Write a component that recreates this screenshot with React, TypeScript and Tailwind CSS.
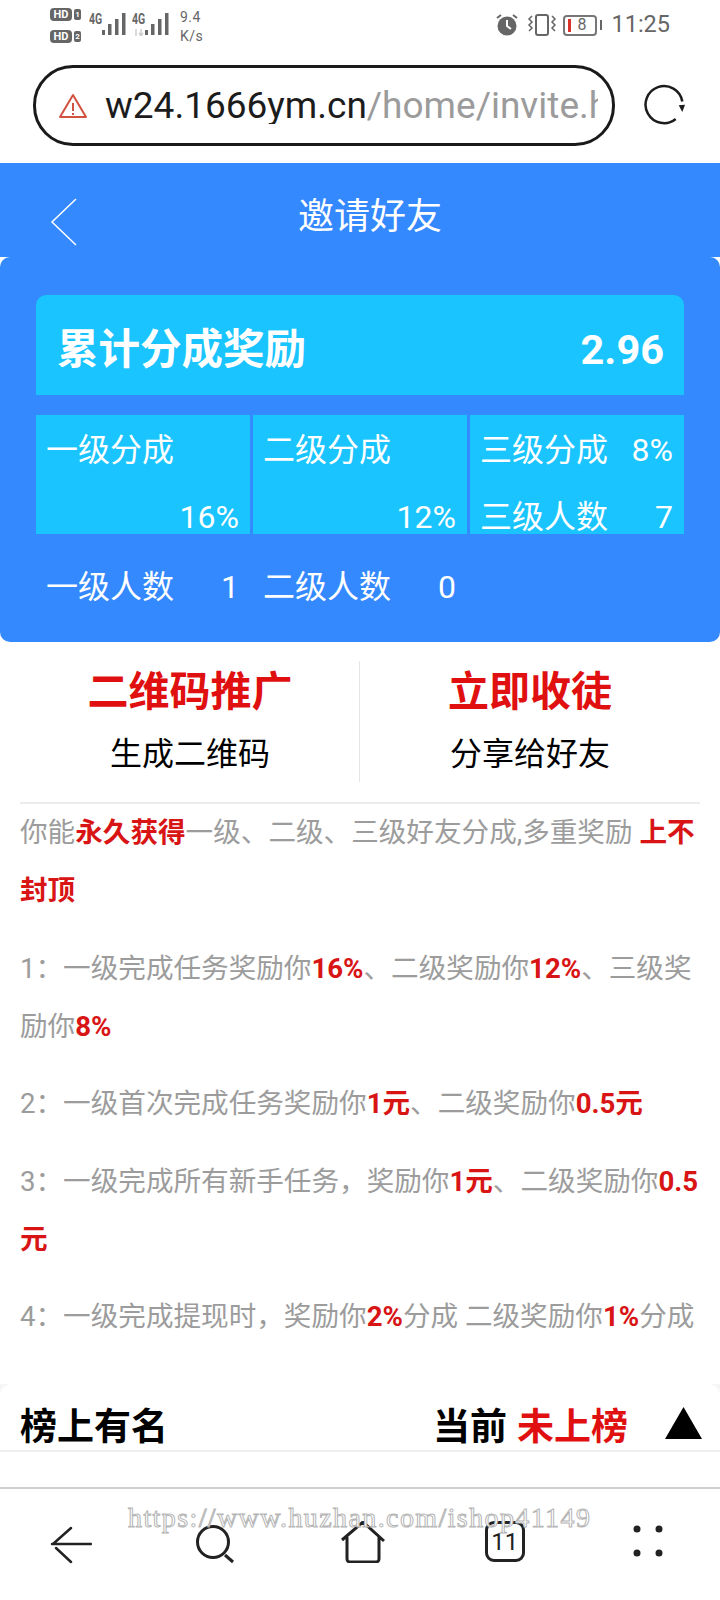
import React from "react";

const zh = "font-['Roboto','Noto_Sans_CJK_SC',sans-serif]";

const HdBadge = ({ n }: { n: string }) => (
  <div className="flex items-center gap-[2px]">
    <div className="flex h-[13px] w-[22px] items-center justify-center rounded-[4px] bg-[#666] text-[11px] leading-none font-bold text-white">
      HD
    </div>
    <div className="flex h-[11px] w-[7px] items-center justify-center rounded-[2px] bg-[#666] text-[8px] leading-none font-bold text-white">
      {n}
    </div>
  </div>
);

const Signal = () => (
  <svg width="24" height="22" viewBox="0 0 24 22" fill="#666">
    <rect x="0" y="17" width="3" height="5" />
    <rect x="6" y="11" width="3.5" height="11" />
    <rect x="13" y="6" width="3.5" height="16" />
    <rect x="20" y="0" width="3.5" height="22" />
  </svg>
);

const FourG = () => (
  <span className="w-[13px] origin-left scale-x-75 text-[14px] leading-[12px] font-bold">
    4G
  </span>
);

const StatusBar = () => (
  <div className="flex h-[65px] items-start justify-between pt-[8px] pr-[50px] pl-[50px] text-[#666]">
    <div className="flex items-start">
      <div className="flex flex-col gap-[9px]">
        <HdBadge n="1" />
        <HdBadge n="2" />
      </div>
      <div className="mt-[5px] ml-[8px] flex items-start">
        <FourG />
        <Signal />
        <div className="relative ml-[6px] flex items-start">
          <FourG />
          <Signal />
          <svg className="absolute top-[16px] left-[2px]" width="10" height="7" viewBox="0 0 10 7" fill="none" stroke="#cfcfcf" strokeWidth="1.5">
            <path d="M2 0v7M7 0v7M5 4l2 3 2-3" />
          </svg>
        </div>
      </div>
      <div className="ml-[11px] text-[14px] leading-[19px] tracking-[0.5px]">
        <div>9.4</div>
        <div>K/s</div>
      </div>
    </div>
    <div className="mt-[5px] flex items-center">
      <svg width="24" height="24" viewBox="0 0 24 24" fill="#666">
        <circle cx="12" cy="13" r="9.5" />
        <path d="M12 7v6l4 3" stroke="#fff" strokeWidth="2" fill="none" />
        <path d="M2 5l4-3M22 5l-4-3" stroke="#666" strokeWidth="2" fill="none" />
      </svg>
      <svg className="ml-[7px]" width="32" height="22" viewBox="0 0 32 22" fill="none" stroke="#666" strokeWidth="1.5">
        <rect x="10" y="1" width="12" height="20" rx="2" strokeWidth="2" />
        <path d="M6 2l-3 3 3 3-3 3 3 3-3 3" />
        <path d="M26 2l3 3-3 3 3 3-3 3 3 3" />
      </svg>
      <div className="ml-[5px] flex items-center">
        <div className="flex h-[21px] w-[34px] items-center rounded-[4px] border-2 border-[#777] pl-[3px]">
          <div className="h-[13px] w-[3px] bg-[#d9332b]" />
          <span className="ml-[6px] text-[16px] leading-none">8</span>
        </div>
        <div className="ml-[3px] h-[10px] w-[2px] bg-[#666]" />
      </div>
      <span className="ml-[9px] text-[23.5px] leading-none">11:25</span>
    </div>
  </div>
);

const UrlBar = () => (
  <div className="flex h-[98px] items-start pl-[33px]">
    <div className="flex h-[81px] w-[582px] items-center rounded-[40px] border-[3px] border-[#1a1a1a] pr-[14px] pl-[22px]">
      <svg className="shrink-0" width="30" height="28" viewBox="0 0 30 28" fill="none" stroke="#d0523f" strokeWidth="2" strokeLinejoin="round">
        <path d="M15 3L28 25H2Z" />
        <path d="M15 11v8M15 21v2" />
      </svg>
      <div className="ml-[17px] overflow-hidden text-[37px] leading-none whitespace-nowrap">
        <span className="text-[#1c1c1c]">w24.1666ym.cn</span>
        <span className="text-[#9b9b9b]">/home/invite.html</span>
      </div>
    </div>
    <svg className="mt-[18px] ml-[28px]" width="44" height="42" viewBox="0 0 44 42" fill="none" stroke="#1c1c1c" strokeWidth="2.5">
      <path d="M32.7 36A18.5 18.5 0 1 1 39.3 18.5" />
      <path d="M35.7 22.3L42 21.7L39.3 29Z" fill="#1c1c1c" stroke="none" />
    </svg>
  </div>
);

const Cell = ({ label, value }: { label: string; value: string }) => (
  <div className="flex h-[119px] flex-col justify-between bg-[#19c4ff] pr-[11px] pl-[10px]">
    <div className="pt-[15px] text-[32px] leading-[40px]">{label}</div>
    <div className="text-right text-[32px] leading-[33px]">{value}</div>
  </div>
);

const Count = ({ label, value }: { label: string; value: string }) => (
  <div className="flex items-center justify-between pr-[11px] pl-[10px] text-[32px] leading-[40px]">
    <span>{label}</span>
    <span>{value}</span>
  </div>
);

const Hero = () => (
  <>
    <div className="relative flex h-[94px] items-center justify-center bg-[#3489ff] pt-[14px] pl-[20px] text-white">
      <svg className="absolute top-[34px] left-[50px]" width="28" height="50" viewBox="0 0 28 50" fill="none" stroke="#fff" strokeWidth="1.5">
        <path d="M26 2L2 25l24 23" />
      </svg>
      <span className="text-[36px] leading-none">邀请好友</span>
    </div>
    <div className="h-[385px] rounded-[10px] bg-[#3489ff] px-[36px] pt-[38px] text-white">
      <div className="flex h-[100px] items-center justify-between rounded-t-[10px] bg-[#19c4ff] pt-[10px] pr-[20px] pl-[21px]">
        <span className="text-[41.5px] leading-none font-bold">累计分成奖励</span>
        <span className="text-[41.5px] leading-none font-bold">2.96</span>
      </div>
      <div className="mt-[20px] grid grid-cols-3 gap-x-[3px]">
        <Cell label="一级分成" value="16%" />
        <Cell label="二级分成" value="12%" />
        <div className="flex h-[119px] flex-col justify-between bg-[#19c4ff] pr-[11px] pl-[10px]">
          <div className="flex items-center justify-between pt-[15px] text-[32px] leading-[40px]">
            <span>三级分成</span>
            <span>8%</span>
          </div>
          <div className="flex items-center justify-between text-[32px] leading-[33px]">
            <span>三级人数</span>
            <span>7</span>
          </div>
        </div>
      </div>
      <div className="mt-[33px] grid grid-cols-3 gap-x-[3px]">
        <Count label="一级人数" value="1" />
        <Count label="二级人数" value="0" />
      </div>
    </div>
  </>
);

const Action = ({ title, sub }: { title: string; sub: string }) => (
  <div className="flex flex-1 flex-col items-center pt-[3px]">
    <div className="text-[41px] leading-[56px] font-bold text-[#e01010]">{title}</div>
    <div className="mt-[9px] text-[32px] leading-[50px] text-black">{sub}</div>
  </div>
);

const Actions = () => (
  <div className="mx-[20px] mt-[19px] flex h-[143px] items-start border-b-2 border-[#ececec] pb-[20px]">
    <Action title="二维码推广" sub="生成二维码" />
    <div className="-ml-[1px] h-[121px] w-px bg-[#e5e5e5]" />
    <Action title="立即收徒" sub="分享给好友" />
  </div>
);

const R = ({ children }: { children: React.ReactNode }) => (
  <b className="font-bold text-[#d81414]">{children}</b>
);

const Rules = () => (
  <div className="flex flex-col gap-[19.5px] px-[20px] text-[27.6px] leading-[58px] text-[#9c9c9c]">
    <p>
      你能<R>永久获得</R>一级、二级、三级好友分成,多重奖励 <R>上不封顶</R>
    </p>
    <p>
      1：一级完成任务奖励你<R>16%</R>、二级奖励你<R>12%</R>、三级奖励你<R>8%</R>
    </p>
    <p>
      2：一级首次完成任务奖励你<R>1元</R>、二级奖励你<R>0.5元</R>
    </p>
    <p>
      3：一级完成所有新手任务，奖励你<R>1元</R>、二级奖励你<R>0.5元</R>
    </p>
    <p>
      4：一级完成提现时，奖励你<R>2%</R>分成 二级奖励你<R>1%</R>分成
    </p>
  </div>
);

const Rank = () => (
  <div className="mt-[38px] bg-[#f6f6f6]">
    <div className="flex h-[68px] items-center justify-between rounded-t-[12px] border-b-2 border-[#eeeeee] bg-white pt-[21px] pr-[18px] pl-[20px] text-[37px] leading-none font-bold text-black">
      <span>榜上有名</span>
      <div className="flex items-center">
        <span>当前</span>
        <span className="ml-[10px] text-[#e01010]">未上榜</span>
        <svg className="ml-[37px] -translate-y-[5px]" width="37" height="32" viewBox="0 0 37 32" fill="#000">
          <path d="M18.5 0L37 32H0Z" />
        </svg>
      </div>
    </div>
  </div>
);

const BottomNav = () => (
  <div className="relative mt-[35px] flex h-[112px] items-start justify-between border-t-2 border-[#cfcfcf] pt-[36px] pr-[57px] pl-[50px]">
    <svg width="42" height="40" viewBox="0 0 42 40" fill="none" stroke="#222" strokeWidth="2.5" strokeLinecap="round">
      <path d="M2 19h39M3 19L21 3M6 23l15 14" />
    </svg>
    <svg className="-mt-[2px]" width="40" height="42" viewBox="0 0 40 42" fill="none" stroke="#222" strokeWidth="3">
      <circle cx="17" cy="19" r="15.5" />
      <path d="M29 32l8 7" />
    </svg>
    <svg className="-mt-[4px]" width="44" height="42" viewBox="0 0 44 42" fill="none" stroke="#222" strokeWidth="3" strokeLinejoin="round">
      <path d="M1 19L22 1l21 19M6 16v22a3 3 0 0 0 3 3h26a3 3 0 0 0 3-3V16" />
    </svg>
    <div className="-mt-[4px] flex h-[41px] w-[40px] -translate-x-[4px] items-center justify-center rounded-[9px] border-[3px] border-[#222] text-[24px] leading-none text-[#222]">
      11
    </div>
    <svg width="30" height="32" viewBox="0 0 30 32" fill="#222">
      <circle cx="4" cy="4" r="3.5" />
      <circle cx="26" cy="4" r="3.5" />
      <circle cx="4" cy="28" r="3.5" />
      <circle cx="26" cy="28" r="3.5" />
    </svg>
    <div className="absolute top-[15px] left-[128px] font-['Liberation_Serif',serif] text-[28px] leading-none tracking-[1.4px] whitespace-nowrap text-white [-webkit-text-stroke:1px_#b5b5b5]">
      https://www.huzhan.com/ishop41149
    </div>
  </div>
);

export default function App() {
  return (
    <div className={`h-[1600px] w-[720px] overflow-hidden bg-white ${zh}`}>
      <StatusBar />
      <UrlBar />
      <Hero />
      <Actions />
      <Rules />
      <Rank />
      <BottomNav />
    </div>
  );
}
